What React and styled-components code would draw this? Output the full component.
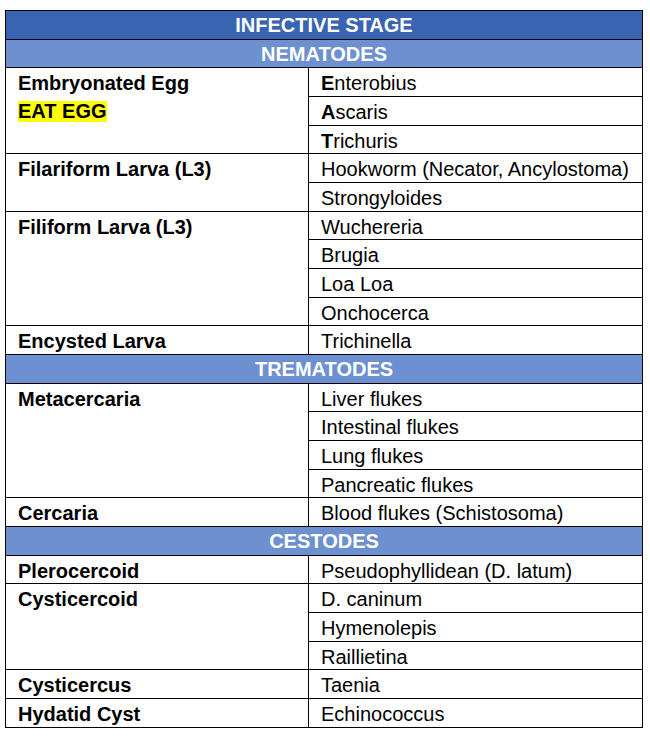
import React from "react";
import styled, { createGlobalStyle } from "styled-components";

const GlobalStyle = createGlobalStyle`
  html, body {
    margin: 0;
    padding: 0;
    background: #ffffff;
  }
  body {
    font-family: "Liberation Sans", Arial, sans-serif;
  }
`;

// stage groups: one stage on the left, its genera on the right
const sections = [
  {
    title: "NEMATODES",
    groups: [
      {
        stage: "Embryonated Egg",
        note: "EAT EGG",
        items: [
          { first: "E", rest: "nterobius" },
          { first: "A", rest: "scaris" },
          { first: "T", rest: "richuris" },
        ],
      },
      {
        stage: "Filariform Larva (L3)",
        items: ["Hookworm (Necator, Ancylostoma)", "Strongyloides"],
      },
      {
        stage: "Filiform Larva (L3)",
        items: ["Wuchereria", "Brugia", "Loa Loa", "Onchocerca"],
      },
      { stage: "Encysted Larva", items: ["Trichinella"] },
    ],
  },
  {
    title: "TREMATODES",
    groups: [
      {
        stage: "Metacercaria",
        items: ["Liver flukes", "Intestinal flukes", "Lung flukes", "Pancreatic flukes"],
      },
      { stage: "Cercaria", items: ["Blood flukes (Schistosoma)"] },
    ],
  },
  {
    title: "CESTODES",
    groups: [
      { stage: "Plerocercoid", items: ["Pseudophyllidean (D. latum)"] },
      {
        stage: "Cysticercoid",
        items: ["D. caninum", "Hymenolepis", "Raillietina"],
      },
      { stage: "Cysticercus", items: ["Taenia"] },
      { stage: "Hydatid Cyst", items: ["Echinococcus"] },
    ],
  },
];

const InfectiveTable = () => {
  return (
    <Page>
      <GlobalStyle />
      <Table>
        <colgroup>
          <col style={{ width: 303 }} />
          <col />
        </colgroup>
        <tbody>
          <tr>
            <HeadCell colSpan={2} $dark>
              INFECTIVE STAGE
            </HeadCell>
          </tr>
          {sections.map((section) => (
            <React.Fragment key={section.title}>
              <tr>
                <HeadCell colSpan={2}>{section.title}</HeadCell>
              </tr>
              {section.groups.map((group) =>
                group.items.map((item, i) => (
                  <tr key={group.stage + i}>
                    {i === 0 && (
                      <StageCell rowSpan={group.items.length}>
                        <div>{group.stage}</div>
                        {group.note && <Highlight>{group.note}</Highlight>}
                      </StageCell>
                    )}
                    <ItemCell>
                      {typeof item === "string" ? (
                        item
                      ) : (
                        <>
                          <b>{item.first}</b>
                          {item.rest}
                        </>
                      )}
                    </ItemCell>
                  </tr>
                ))
              )}
            </React.Fragment>
          ))}
        </tbody>
      </Table>
    </Page>
  );
};

export const Page = styled.div`
  padding: 10px 0 0 5px;
`;

export const Table = styled.table`
  width: 638px;
  border-collapse: collapse;
  table-layout: fixed;
  border: 1px solid #000;
  font-size: 20px;
  line-height: 22px;
  color: #000;

  tr {
    height: 28.68px;
  }
`;

export const HeadCell = styled.td`
  padding: 1px 0 0;
  text-align: center;
  font-weight: 700;
  color: #fff;
  background: ${(p) => (p.$dark ? "#3864b2" : "#6d91d0")};
  border: 1px solid #000;
`;

export const StageCell = styled.td`
  padding: 4px 12px 0;
  vertical-align: top;
  font-weight: 700;
  border: 1px solid #000;
`;

export const Highlight = styled.span`
  display: inline-block;
  background: #ffff00;
  line-height: 21px;
  margin-top: 7px;
`;

export const ItemCell = styled.td`
  padding: 2px 12px 0;
  vertical-align: middle;
  border: 1px solid #000;
  white-space: nowrap;
`;

export default InfectiveTable;
